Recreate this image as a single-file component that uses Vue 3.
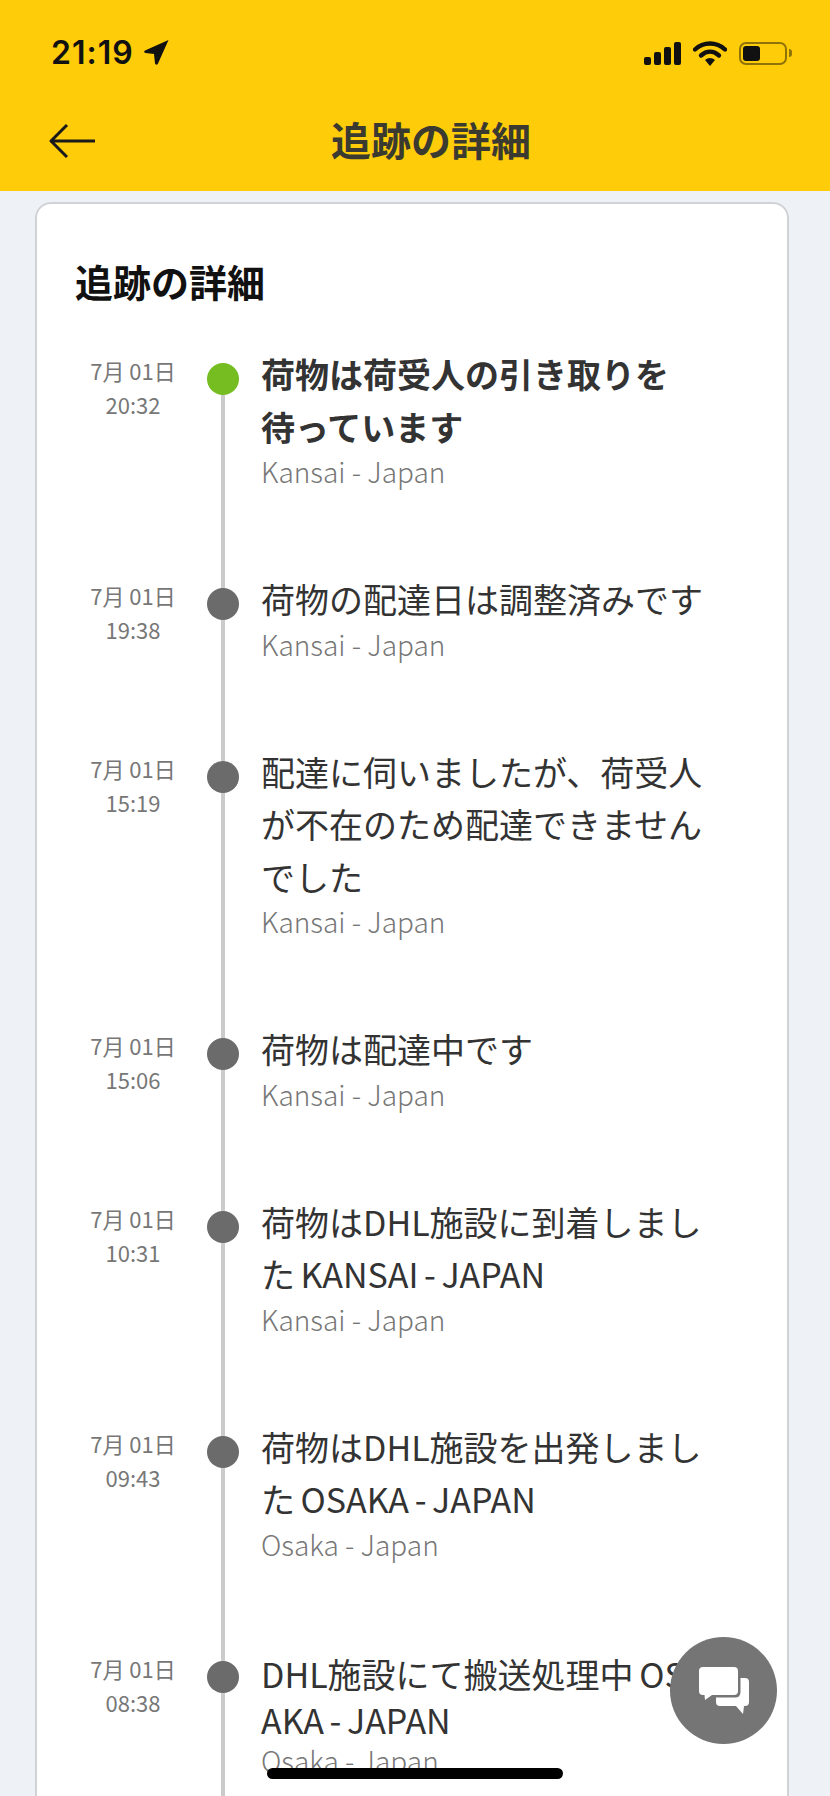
<script setup>
const events = [
  { date: "7月 01日", time: "20:32", title: "荷物は荷受人の引き取りを待っています", place: "Kansai - Japan", current: true },
  { date: "7月 01日", time: "19:38", title: "荷物の配達日は調整済みです", place: "Kansai - Japan" },
  { date: "7月 01日", time: "15:19", title: "配達に伺いましたが、荷受人が不在のため配達できませんでした", place: "Kansai - Japan" },
  { date: "7月 01日", time: "15:06", title: "荷物は配達中です", place: "Kansai - Japan" },
  { date: "7月 01日", time: "10:31", title: "荷物はDHL施設に到着しました KANSAI - JAPAN", place: "Kansai - Japan" },
  { date: "7月 01日", time: "09:43", title: "荷物はDHL施設を出発しました OSAKA - JAPAN", place: "Osaka - Japan" },
  { date: "7月 01日", time: "08:38", title: "DHL施設にて搬送処理中 OSAKA - JAPAN", place: "Osaka - Japan", tight: true },
];
</script>

<template>
  <div class="screen">
    <header class="top">
      <div class="status">
        <div class="status__left">
          <span class="status__time">21:19</span>
          <svg class="status__loc" width="25" height="26" viewBox="0 0 25 26">
            <path d="M24.5 0 L1 10.5 Q-1 12 1.5 13 L10 14 L11 23.5 Q12.5 26 14 23.5 Z" fill="#111" />
          </svg>
        </div>
        <div class="status__right">
          <svg width="37" height="23" viewBox="0 0 37 23">
            <rect x="0" y="15" width="7" height="8" rx="2" fill="#111" />
            <rect x="10" y="10" width="7" height="13" rx="2" fill="#111" />
            <rect x="20" y="5" width="7" height="18" rx="2" fill="#111" />
            <rect x="30" y="0" width="7" height="23" rx="2" fill="#111" />
          </svg>
          <svg width="34" height="25" viewBox="0 0 34 25">
            <path d="M2 8.5 C10.5 0.5 23.5 0.5 32 8.5" fill="none" stroke="#111" stroke-width="4.4" stroke-linecap="round" />
            <path d="M8 14.5 C13.5 9.5 20.5 9.5 26 14.5" fill="none" stroke="#111" stroke-width="4.4" stroke-linecap="round" />
            <path d="M12 19 C15 16.2 19 16.2 22 19 L17 25 Z" fill="#111" />
          </svg>
          <div class="battery">
            <div class="battery__body"><div class="battery__fill"></div></div>
            <div class="battery__nub"></div>
          </div>
        </div>
      </div>
      <div class="nav">
        <svg class="nav__back" width="46" height="34" viewBox="0 0 46 34">
          <path d="M46 17 H2 M18 1 L2 17 L18 33" fill="none" stroke="#1a1a1a" stroke-width="3" stroke-linejoin="round" />
        </svg>
        <h1 class="nav__title">追跡の詳細</h1>
      </div>
    </header>

    <main class="content">
      <section class="card">
        <h2 class="card__title">追跡の詳細</h2>
        <ul class="timeline">
          <li
            v-for="(item, index) in events"
            :key="index"
            class="event"
            :class="{ 'event--first': index === 0, 'event--tight': item.tight }"
          >
            <div class="event__when">
              <div>{{ item.date }}</div>
              <div>{{ item.time }}</div>
            </div>
            <div class="event__rail">
              <span class="event__dot" :class="{ 'event__dot--current': item.current }"></span>
            </div>
            <div class="event__body">
              <div class="event__title" :class="{ 'event__title--current': item.current }">{{ item.title }}</div>
              <div class="event__place">{{ item.place }}</div>
            </div>
          </li>
        </ul>
      </section>
    </main>

    <button class="chat" aria-label="chat">
      <svg width="52" height="50" viewBox="0 0 52 50">
        <path d="M5 1 H36 Q40 1 40 5 V25 Q40 29 36 29 H14 L7 34 L6.5 29 H5 Q1 29 1 25 V5 Q1 1 5 1 Z" fill="#fff" />
        <path d="M42.5 12 H47 Q51 12 51 16 V36 Q51 40 47 40 L46 40 L45 48 L38 40 H22 Q18 40 18 36 V31.5 H37 Q42.5 31.5 42.5 26 Z" fill="#fff" />
      </svg>
    </button>
    <div class="home-bar"></div>
  </div>
</template>

<style scoped>
.screen {
  position: relative;
  width: 830px;
  height: 1796px;
  overflow: hidden;
  background: #eef2f6;
  font-family: "Noto Sans CJK JP", "Noto Sans", sans-serif;
  color: #333;
}

.top {
  height: 191px;
  background: #fecc09;
}

.status {
  height: 100px;
  padding: 6px 38px 0 51px;
  display: flex;
  justify-content: space-between;
  align-items: center;
  box-sizing: border-box;
}

.status__left {
  display: flex;
  align-items: center;
  gap: 10px;
}

.status__time {
  font-family: "Inter", "Liberation Sans", sans-serif;
  font-size: 32px;
  font-weight: 600;
  letter-spacing: 1px;
  color: #111;
  line-height: 36px;
}

.status__right {
  display: flex;
  align-items: center;
  gap: 12px;
}

.battery {
  display: flex;
  align-items: center;
  gap: 2px;
}

.battery__body {
  width: 48px;
  height: 23px;
  box-sizing: border-box;
  border: 2px solid #8f7308;
  border-radius: 7px;
  padding: 2px;
}

.battery__fill {
  width: 17px;
  height: 100%;
  background: #111;
  border-radius: 3px;
}

.battery__nub {
  width: 3px;
  height: 8px;
  background: #8f7308;
  border-radius: 0 3px 3px 0;
}

.nav {
  height: 91px;
  display: flex;
  align-items: center;
  padding: 0 0 10px 49px;
  box-sizing: border-box;
}

.nav__back {
  flex: none;
}

.nav__title {
  margin: -4px 0 0 236px;
  font-size: 40px;
  font-weight: 700;
  line-height: 50px;
  color: #3b3a30;
}

.content {
  padding: 11px 41px 0 35px;
}

.card {
  background: #fff;
  border: 2px solid #cfd3d6;
  border-radius: 16px;
  padding: 52px 0 0 38px;
  height: 1700px;
  box-sizing: border-box;
}

.card__title {
  margin: 0 0 44px;
  font-size: 38px;
  font-weight: 700;
  line-height: 50px;
  color: #111;
}

.timeline {
  list-style: none;
  margin: 0;
  padding: 0;
}

.event {
  display: grid;
  grid-template-columns: 116px 62px 1fr;
}

.event__when {
  padding-top: 3px;
  text-align: center;
  font-size: 22px;
  line-height: 34px;
  color: #777;
}

.event__rail {
  position: relative;
  display: flex;
  justify-content: center;
  padding-left: 1px;
}

.event__rail::before {
  content: "";
  position: absolute;
  top: 0;
  bottom: 0;
  left: 30px;
  width: 4px;
  background: #cbcbcb;
}

.event--first .event__rail::before {
  top: 13px;
}

.event__dot {
  position: relative;
  width: 32px;
  height: 32px;
  margin-top: 13px;
  border-radius: 50%;
  background: #6b6b6b;
}

.event__dot--current {
  background: #76bd22;
}

.event__body {
  padding: 0 0 84px 8px;
  width: 446px;
}

.event__title {
  margin-top: -2px;
  font-size: 34px;
  line-height: 52.5px;
  color: #333;
  word-spacing: -2px;
}

.event__title--current {
  padding-right: 30px;
  font-weight: 700;
}

.event__place {
  margin-top: -2px;
  font-size: 28px;
  font-weight: 300;
  line-height: 40px;
  color: #777;
}

.event--tight .event__title {
  margin-top: 3px;
  padding-right: 8px;
  line-height: 46.5px;
  word-break: break-all;
}

.event--tight .event__place {
  margin-top: 0;
  line-height: 32px;
}

.chat {
  position: absolute;
  left: 670px;
  top: 1637px;
  width: 107px;
  height: 107px;
  border: none;
  border-radius: 50%;
  background: #757575;
  padding: 0;
  display: flex;
  align-items: center;
  justify-content: center;
}

.home-bar {
  position: absolute;
  left: 267px;
  top: 1768px;
  width: 296px;
  height: 11px;
  border-radius: 6px;
  background: #000;
}
</style>
